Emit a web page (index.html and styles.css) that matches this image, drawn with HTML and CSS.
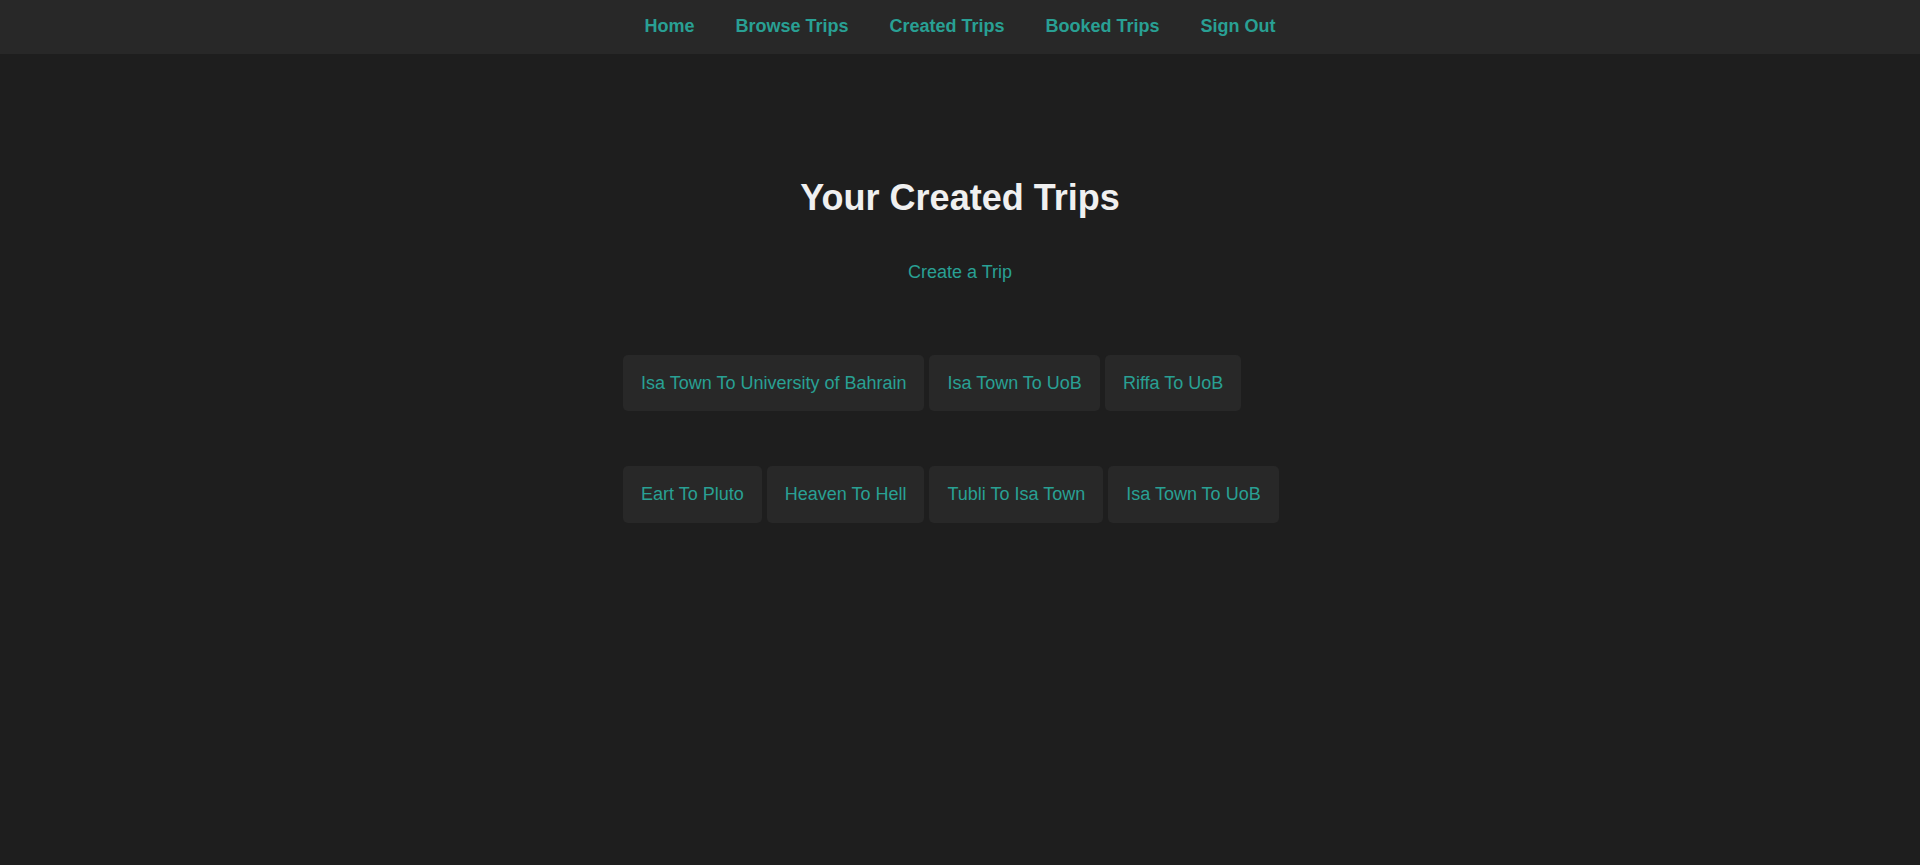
FILE: index.html
```html
<!DOCTYPE html>
<html lang="en">
<head>
<meta charset="utf-8">
<title>Your Created Trips</title>
<link rel="stylesheet" href="styles.css">
</head>
<body>
<nav class="topnav">
  <a class="nav-link" href="#">Home</a>
  <a class="nav-link" href="#">Browse Trips</a>
  <a class="nav-link" href="#">Created Trips</a>
  <a class="nav-link" href="#">Booked Trips</a>
  <a class="nav-link" href="#">Sign Out</a>
</nav>
<main class="content">
  <h1 class="title">Your Created Trips</h1>
  <a class="create-link" href="#">Create a Trip</a>
  <div class="trips">
    <div class="trip-row">
      <a class="trip" href="#">Isa Town To University of Bahrain</a>
      <a class="trip" href="#">Isa Town To UoB</a>
      <a class="trip" href="#">Riffa To UoB</a>
    </div>
    <div class="trip-row">
      <a class="trip" href="#">Eart To Pluto</a>
      <a class="trip" href="#">Heaven To Hell</a>
      <a class="trip" href="#">Tubli To Isa Town</a>
      <a class="trip" href="#">Isa Town To UoB</a>
    </div>
  </div>
</main>
</body>
</html>
```

FILE: styles.css
```css
html, body {
  margin: 0;
  padding: 0;
}

body {
  background: #1e1e1e;
  font-family: "Liberation Sans", Arial, sans-serif;
  font-size: 18px;
  color: #eeeeee;
  min-height: 865px;
}

.topnav {
  background: #282828;
  height: 54px;
  box-sizing: border-box;
  padding-top: 16px;
  display: flex;
  justify-content: center;
  align-items: flex-start;
  gap: 41px;
}

.nav-link {
  color: #29a094;
  font-weight: bold;
  font-size: 18px;
  line-height: 20.7px;
  text-decoration: none;
}

.content {
  display: flex;
  flex-direction: column;
  align-items: center;
}

.title {
  margin: 123px 0 0;
  font-size: 36px;
  line-height: 41.4px;
  font-weight: bold;
  color: #f0f0f0;
}

.create-link {
  margin-top: 43.5px;
  color: #29a094;
  text-decoration: none;
  font-size: 18px;
  line-height: 20.7px;
}

.trips {
  margin-top: 72px;
  width: 674px;
  display: flex;
  flex-direction: column;
  gap: 54.5px;
}

.trip-row {
  display: flex;
  flex-wrap: wrap;
  gap: 5px;
}

.trip {
  display: block;
  background: #282828;
  color: #29a094;
  text-decoration: none;
  font-size: 18px;
  line-height: 20.7px;
  padding: 18px;
  border-radius: 5px;
}
```
